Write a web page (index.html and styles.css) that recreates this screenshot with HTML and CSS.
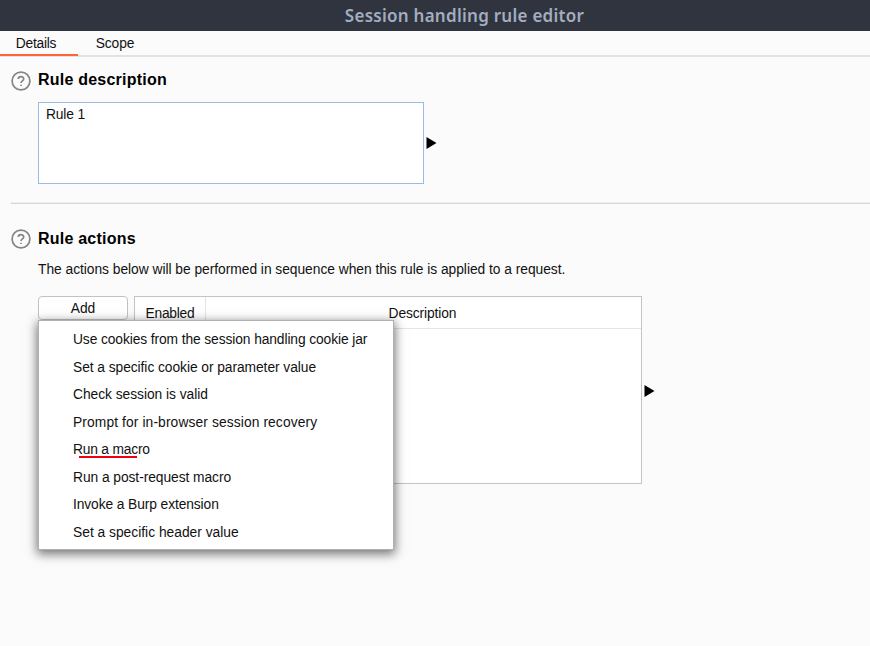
FILE: index.html
```html
<!DOCTYPE html>
<html lang="en">
<head>
<meta charset="utf-8">
<title>Session handling rule editor</title>
<link rel="stylesheet" href="styles.css">
</head>
<body>
<header class="titlebar"><span class="title">Session handling rule editor</span></header>
<nav class="tabs">
  <div class="tab active"><span class="t-details">Details</span></div>
  <div class="tab"><span class="t-scope">Scope</span></div>
</nav>
<main>
  <section class="description">
    <div class="heading">
      <svg class="help" viewBox="0 0 20 20"><circle cx="10" cy="10" r="8.9"/><path d="M7.3 8.1C7.3 4.9 12.7 4.9 12.7 8C12.7 9.9 10 9.9 10 12.1"/><path d="M10 13.7V15.1"/></svg>
      <h2 class="h-desc">Rule description</h2>
    </div>
    <div class="row">
      <div class="field"><span class="t-rule">Rule 1</span></div>
      <svg class="arrow" viewBox="0 0 11 12"><path d="M.5 0L10.5 6L.5 12Z"/></svg>
    </div>
  </section>
  <section class="actions">
    <div class="heading">
      <svg class="help" viewBox="0 0 20 20"><circle cx="10" cy="10" r="8.9"/><path d="M7.3 8.1C7.3 4.9 12.7 4.9 12.7 8C12.7 9.9 10 9.9 10 12.1"/><path d="M10 13.7V15.1"/></svg>
      <h2 class="h-act">Rule actions</h2>
    </div>
    <p class="intro"><span class="t-intro">The actions below will be performed in sequence when this rule is applied to a request.</span></p>
    <div class="row">
      <div class="add-wrap">
        <button class="add" type="button"><span class="t-add">Add</span></button>
        <ul class="menu">
          <li><span class="m1">Use cookies from the session handling cookie jar</span></li>
          <li><span class="m2">Set a specific cookie or parameter value</span></li>
          <li><span class="m3">Check session is valid</span></li>
          <li><span class="m4">Prompt for in-browser session recovery</span></li>
          <li><span class="m5 marked">Run a macro</span></li>
          <li><span class="m6">Run a post-request macro</span></li>
          <li><span class="m7">Invoke a Burp extension</span></li>
          <li><span class="m8">Set a specific header value</span></li>
        </ul>
      </div>
      <div class="table">
        <div class="thead">
          <div class="col-enabled"><span class="t-enabled">Enabled</span></div>
          <div class="col-description"><span class="t-description">Description</span></div>
        </div>
      </div>
      <svg class="arrow" viewBox="0 0 11 12"><path d="M.5 0L10.5 6L.5 12Z"/></svg>
    </div>
  </section>
</main>
</body>
</html>
```
FILE: styles.css
```css
* { box-sizing: border-box; }
body {
  margin: 0;
  height: 646px;
  overflow: hidden;
  background: #fbfbfb;
  color: #111;
  font: 13.8px/16px "Liberation Sans", Arial, sans-serif;
  letter-spacing: -.15px;
}
span { white-space: nowrap; }
.titlebar {
  height: 31px;
  background: #2f343f;
  color: #a3adbf;
  text-align: center;
  padding: 4px 0 0 59px;
  font: 600 17px/24px "Noto Sans", "Open Sans", sans-serif;
  letter-spacing: .26px;
}
.tabs { display: flex; height: 26px; border-bottom: 2px solid #dfe3e2; }
.tab { width: 78px; height: 25px; padding-top: 5px; text-align: center; }
.tab.active { width: 78px; border-bottom: 2px solid #ff6633; padding-right: 6px; }
.tab:not(.active) { width: 74px; }
.t-details { letter-spacing: -.25px; }
.t-scope { letter-spacing: -.08px; }
.heading { display: flex; align-items: center; height: 20px; gap: 7px; }
.help { width: 20px; height: 20px; fill: none; stroke: #858585; stroke-width: 1.7; }
h2 { margin: -2px 0 0; font-size: 16px; line-height: 20px; color: #000; white-space: nowrap; letter-spacing: .22px; }
.h-act { margin-top: 0; }
.description {
  margin-left: 11px; padding-top: 14px; height: 147px;
  border-bottom: 1px solid #d6d6d6; box-shadow: inset 0 -1px #efefef;
}
.row { display: flex; }
.description .row { margin: 11px 0 0 27px; align-items: center; }
.field { width: 386px; height: 82px; border: 1.5px solid #9abbe2; background: #fff; padding: 4px 7px; }
.arrow { width: 11px; height: 12px; margin-left: 2px; fill: #000; }
.actions { margin-left: 11px; padding-top: 25px; }
.intro { margin: 13px 0 0 27px; line-height: 16px; letter-spacing: -.03px; }
.actions .row { margin: 18px 0 0 27px; }
.add-wrap { position: relative; width: 90px; height: 24px; margin-right: 6px; }
.add {
  width: 90px; height: 24px; padding: 1px 0 0;
  display: block; border: 1.5px solid #c5c1c1; border-radius: 4px;
  background: #fff; color: #111; font: inherit;
}
.menu {
  position: absolute; z-index: 1; left: 0; top: 24px;
  width: 356px; height: 230px; margin: 0; padding: 5.4px 0 0 34px;
  list-style: none; background: #fff; border: 1px solid #b0b0b0;
  box-shadow: 0 3px 10px 1px rgba(0, 0, 0, .55);
}
.menu li { height: 27.5px; line-height: 27.5px; }
.m1 { letter-spacing: -.1px; }
.m2 { letter-spacing: -.06px; }
.m3 { letter-spacing: -.04px; }
.m4 { letter-spacing: .11px; }
.m5 { letter-spacing: -.2px; }
.m6 { letter-spacing: -.06px; }
.m7 { letter-spacing: -.1px; }
.m8 { letter-spacing: 0; }
.marked { position: relative; }
.marked::after {
  content: ""; position: absolute; left: 6px; top: 14px;
  width: 58px; height: 2px; background: #f00010;
}
.table { width: 508px; height: 188px; border: 1.5px solid #c7c3c3; background: #fff; }
.thead { display: flex; height: 32px; border-bottom: 1px solid #e4e4e4; line-height: 33px; text-align: center; }
.col-enabled { width: 71px; border-right: 1px solid #e4e4e4; letter-spacing: -.25px; }
.col-description { flex: 1; padding-right: 2px; }
.t-description { letter-spacing: -.1px; }
.actions .arrow { margin: 89px 0 0 2px; }
```
